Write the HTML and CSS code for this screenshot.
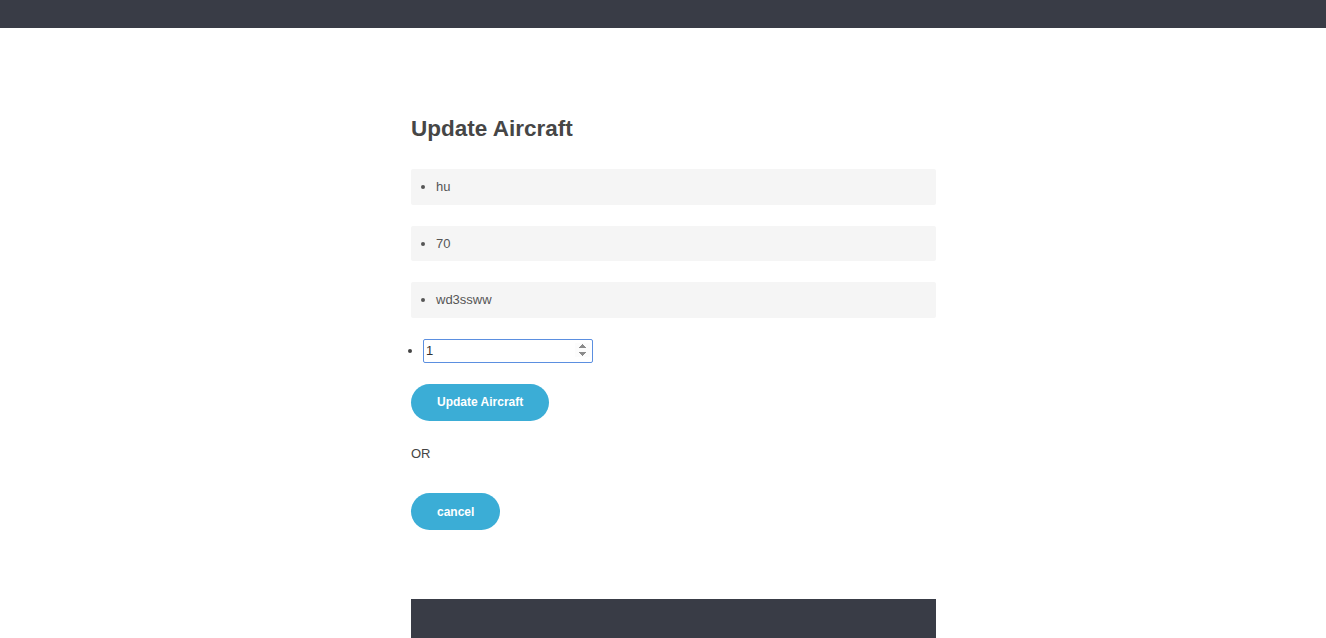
FILE: index.html
```html
<!DOCTYPE html>
<html>
<head>
<meta charset="utf-8">
<link rel="stylesheet" href="styles.css">
</head>
<body>
<header class="topbar"></header>
<main class="content">
  <h1 class="title">Update Aircraft</h1>
  <form class="form">
    <ul class="field"><li>hu</li></ul>
    <ul class="field"><li>70</li></ul>
    <ul class="field"><li>wd3ssww</li></ul>
    <ul class="input-row"><li><input class="num" type="number" value="1" autofocus></li></ul>
    <button type="button" class="btn btn-update">Update Aircraft</button>
    <p class="or">OR</p>
    <button type="button" class="btn btn-cancel">cancel</button>
  </form>
  <footer class="footer"></footer>
</main>
</body>
</html>
```
FILE: styles.css
```css
html, body {
  margin: 0;
  padding: 0;
  background: #fff;
  font-family: "Liberation Sans", Arial, sans-serif;
  color: #444;
}
.topbar {
  height: 28px;
  background: #393c46;
}
.content {
  width: 525px;
  margin-left: calc(50% - 252px);
  padding-top: 88px;
}
.title {
  margin: 0 0 27px;
  font-size: 22.5px;
  line-height: 26px;
  font-weight: bold;
  color: #464646;
}
.form {
  display: flex;
  flex-direction: column;
  align-items: flex-start;
}
.field {
  align-self: stretch;
  box-sizing: border-box;
  height: 35.5px;
  margin: 0 0 21px;
  padding: 0 0 0 25px;
  background: #f5f5f5;
  border-radius: 2px;
  display: flex;
  align-items: center;
  font-size: 13px;
  color: #555;
  list-style: disc outside;
}
.field li { display: list-item; }
.input-row {
  margin: 0 0 21px;
  padding: 0 0 0 12px;
  font-size: 13px;
  height: 24px;
  display: flex;
  align-items: center;
}
.input-row li { display: list-item; }
.num {
  box-sizing: border-box;
  width: 170px;
  height: 24px;
  margin: 0;
  padding: 0 2px;
  border: 1px solid #5b8fe0;
  border-radius: 2px;
  outline: none;
  font-family: "Liberation Sans", Arial, sans-serif;
  font-size: 13px;
  color: #333;
  display: block;
}
.num::-webkit-inner-spin-button {
  opacity: 1;
}
.btn {
  border: none;
  border-radius: 19px;
  background: #3badd6;
  color: #fff;
  font-family: "Liberation Sans", Arial, sans-serif;
  font-weight: bold;
  font-size: 12px;
  height: 37px;
  padding: 0 26px;
  margin: 0;
  cursor: pointer;
}
.or {
  margin: 25px 0 0;
  font-size: 13px;
  line-height: 16px;
  color: #444;
}
.btn-cancel {
  margin-top: 31.5px;
}
.footer {
  margin-top: 69px;
  height: 60px;
  background: #393c46;
}
```
